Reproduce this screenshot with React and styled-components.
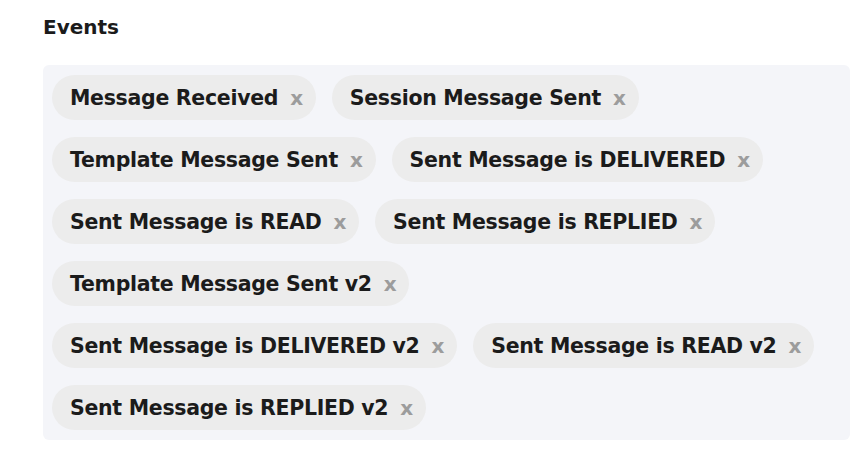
import React from 'react'
import styled, { createGlobalStyle } from 'styled-components'

const GlobalStyle = createGlobalStyle`
    body {
        margin: 0;
        background: #ffffff;
        font-family: "DejaVu Sans", "Liberation Sans", sans-serif;
    }
`

const Page = styled.div`
    padding: 13px 12px 0 43px;
    width: 862px;
    box-sizing: border-box;
`

const Title = styled.h2`
    margin: 0 0 24px 0;
    font-size: 20px;
    line-height: 28px;
    font-weight: 700;
    color: #1b1b1b;
`

const Panel = styled.div`
    width: 807px;
    box-sizing: border-box;
    background: #f4f5f9;
    border-radius: 6px;
    padding: 10px 30px 10px 9px;
    display: flex;
    flex-wrap: wrap;
    gap: 17px 16px;
`

const Chip = styled.div`
    display: flex;
    align-items: center;
    gap: 12px;
    height: 45px;
    padding: 0 13px 0 18px;
    border-radius: 23px;
    background: #ececec;
    font-size: 20.5px;
    letter-spacing: -0.3px;
    font-weight: 700;
    color: #1b1b1b;
    white-space: nowrap;
`

const Remove = styled.span`
    color: #9c9c9c;
    font-size: 20px;
    font-weight: 700;
`

const events = [
    'Message Received',
    'Session Message Sent',
    'Template Message Sent',
    'Sent Message is DELIVERED',
    'Sent Message is READ',
    'Sent Message is REPLIED',
    'Template Message Sent v2',
    'Sent Message is DELIVERED v2',
    'Sent Message is READ v2',
    'Sent Message is REPLIED v2',
]

function App() {
    return (
        <>
            <GlobalStyle />
            <Page>
                <Title>Events</Title>
                <Panel>
                    {events.map((name) => (
                        <Chip key={name}>
                            {name}
                            <Remove>x</Remove>
                        </Chip>
                    ))}
                </Panel>
            </Page>
        </>
    )
}

export default App
